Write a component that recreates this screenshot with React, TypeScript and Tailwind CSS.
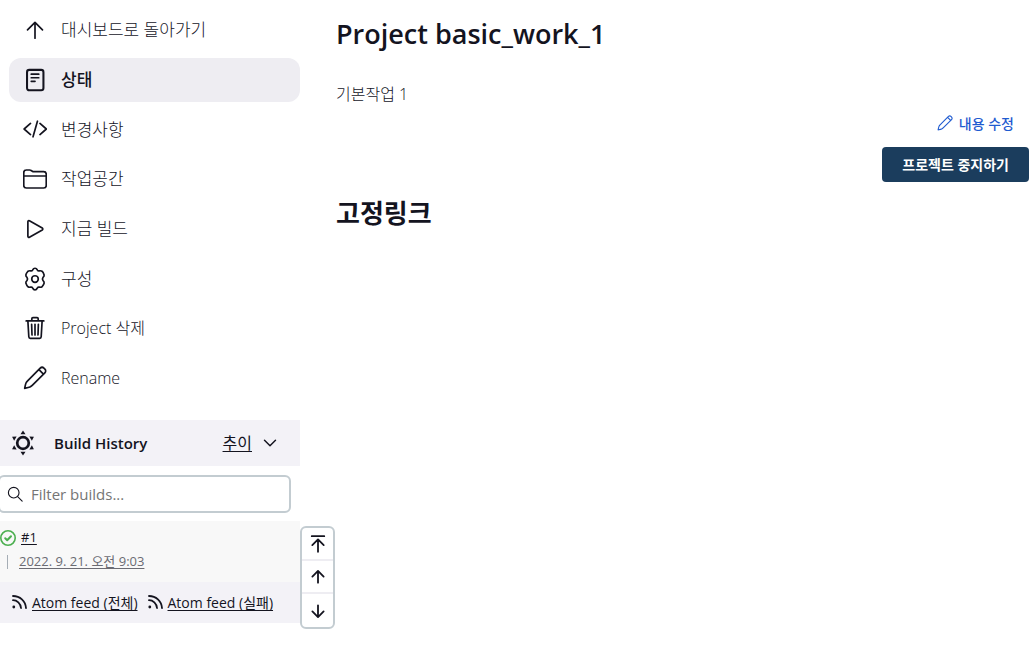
import React from "react";

type IconProps = { className?: string };

function Svg({ children, className = "size-6", width = 36 }: { children: React.ReactNode; className?: string; width?: number }) {
  return (
    <svg viewBox="0 0 512 512" className={`shrink-0 ${className}`} fill="none" stroke="currentColor" strokeWidth={width} strokeLinecap="round" strokeLinejoin="round" aria-hidden="true">
      {children}
    </svg>
  );
}

const ArrowUp = () => (
  <Svg><path d="M96 252L256 92l160 160M256 92v340" /></Svg>
);
const Status = () => (
  <Svg width={44}>
    <rect x="86" y="40" width="350" height="436" rx="48" />
    <path d="M176 132h160M176 208h160M176 284h80" strokeWidth="36" />
  </Svg>
);
const Code = () => (
  <Svg><path d="M160 374L24 256l136-118M362 374l136-118-136-118M308 90l-94 332" /></Svg>
);
const Folder = () => (
  <Svg>
    <path d="M496 192v200a56 56 0 01-56 56H72a56 56 0 01-56-56V120a56 56 0 0156-56h70a56 56 0 0131 9l26 17a56 56 0 0031 10h210a56 56 0 0156 56v36M16 192h480" />
  </Svg>
);
const Play = () => (
  <Svg><path d="M104 100v312c0 17 18 28 33 20l274-156c15-9 15-31 0-40L137 80c-15-8-33 3-33 20z" /></Svg>
);
const Gear = () => (
  <Svg>
    <circle cx="256" cy="256" r="70" />
    <path d="M211 56Q222 26 256 26T301 56Q310 90 347 83Q381 74 406 91T451 169Q455 198 428 220Q403 256 428 292Q455 314 451 343T406 421Q381 438 347 429Q310 422 301 456Q290 486 256 486T211 456Q202 422 165 429Q131 438 106 421T61 343Q57 314 84 292Q109 256 84 220Q57 198 61 169T106 91Q131 74 165 83Q202 90 211 56Z" />
  </Svg>
);
const Trash = () => (
  <Svg>
    <path d="M104 104l20 340c1 18 14 32 32 32h200c18 0 31-14 32-32l20-340M68 104h376M188 104V60a24 24 0 0124-24h88a24 24 0 0124 24v44M256 176v228M184 176l8 228M328 176l-8 228" />
  </Svg>
);
const Pencil = ({ className }: IconProps) => (
  <Svg className={className}>
    <path d="M36 476c10-48 15-79 28-112 8-20 20-34 34-48L367 47c23-23 57-23 79-1l21 21c22 22 22 56-1 79L197 415c-14 14-28 26-48 34-33 13-65 18-113 27zM341 78l94 94" />
  </Svg>
);

const nav = [
  { label: "대시보드로 돌아가기", icon: <ArrowUp />, size: "text-[17px]" },
  { label: "상태", icon: <Status />, size: "text-[17px]", active: true },
  { label: "변경사항", icon: <Code />, size: "text-[17px]" },
  { label: "작업공간", icon: <Folder />, size: "text-[17px]" },
  { label: "지금 빌드", icon: <Play />, size: "text-[17px]" },
  { label: "구성", icon: <Gear />, size: "text-[17px]" },
  { label: "Project 삭제", icon: <Trash />, size: "text-base" },
  { label: "Rename", icon: <Pencil />, size: "text-base" },
];

function BuildIcon() {
  return (
    <svg viewBox="0 0 26 26" className="size-[26px] shrink-0" fill="currentColor" aria-hidden="true">
      <circle cx="13" cy="13" r="5.8" fill="none" stroke="currentColor" strokeWidth="2.7" />
      {[0, 60, 120, 180, 240, 300].map((a) => (
        <path key={a} d="M13 0.400l2.500 3.800h-5z" transform={`rotate(${a} 13 13)`} />
      ))}
    </svg>
  );
}

function Feed({ label }: { label: string }) {
  return (
    <a href="#feed" className="flex items-center gap-1">
      <svg viewBox="0 0 16 16" className="size-4 shrink-0" fill="none" stroke="currentColor" strokeWidth="1.8" strokeLinecap="round" aria-hidden="true">
        <circle cx="1.8" cy="12" r="1.4" fill="currentColor" stroke="none" />
        <path d="M1 5.200C5 5.200 8.600 8.500 9 13M1 1C8 1 13.500 6 14 13" />
      </svg>
      <span className="underline underline-offset-2">{label}</span>
    </a>
  );
}

export default function App() {
  return (
    <div className="flex items-start bg-white font-['Open_Sans','Noto_Sans_CJK_KR',sans-serif] text-[#14141f]">
      <aside className="w-[300px] shrink-0">
        <nav aria-label="프로젝트" className="ml-[9px] flex min-h-[400px] flex-col justify-between pt-2">
          {nav.map((item) => (
            <a
              key={item.label}
              href="#project"
              aria-current={item.active ? "page" : undefined}
              className={`flex h-11 items-center gap-3.5 rounded-xl px-3.5 ${item.size} ${item.active ? "bg-[#eeedf2] font-medium" : "font-light"}`}
            >
              {item.icon}
              <span>{item.label}</span>
            </a>
          ))}
        </nav>

        <section aria-label="Build History" className="mt-5">
          <header className="flex h-[46px] items-center bg-[#f3f2f7] pr-[22px] pl-2.5">
            <BuildIcon />
            <h2 className="ml-[18px] flex-1 text-[15px] font-semibold">Build History</h2>
            <a href="#trend" className="text-base underline underline-offset-2">추이</a>
            <button type="button" aria-label="접기" className="ml-2.5">
              <Svg className="size-4" width={46}><path d="M80 170l176 176 176-176" /></Svg>
            </button>
          </header>
          <label className="-ml-0.5 mt-[9px] mr-[9px] flex h-[38px] items-center gap-2 rounded-md border-2 border-[#c3ccd1] pl-[7px]">
            <Svg className="size-4"><circle cx="215" cy="215" r="170" /><path d="M340 340l145 145" /></Svg>
            <input type="text" aria-label="Filter builds" placeholder="Filter builds..." className="min-w-0 flex-1 bg-transparent text-[15px] outline-none placeholder:text-[#757575]" />
          </label>
          <div className="mt-2 flex h-[61px] flex-col gap-1 bg-[#f8f8f8] pt-[7px] text-[13px]">
            <div className="flex h-5 items-center gap-[5px]">
              <svg viewBox="0 0 16 16" className="size-4 shrink-0" fill="none" stroke="#4caf50" strokeLinecap="round" strokeLinejoin="round" role="img" aria-label="성공">
                <circle cx="8" cy="8" r="7.2" strokeWidth="1.6" />
                <path d="M5.200 8.300l2 2L11 6.200" strokeWidth="2" />
              </svg>
              <a href="#build" className="font-medium underline underline-offset-2">#1</a>
            </div>
            <div className="ml-[7px] flex h-5 items-center gap-[11px]">
              <span className="h-3.5 w-px bg-[#a5adb5]" />
              <a href="#build" className="text-[#6b6b73] underline underline-offset-2">2022. 9. 21. 오전 9:03</a>
            </div>
          </div>
          <footer className="flex h-[41px] items-center gap-2.5 bg-[#f3f2f7] pl-3 text-[14px]">
            <Feed label="Atom feed (전체)" />
            <Feed label="Atom feed (실패)" />
          </footer>
        </section>
      </aside>

      <div className="mt-[526px] flex w-[35px] shrink-0 flex-col divide-y-2 divide-[#eeedf2] rounded-md border-2 border-[#c3ccd1]">
        <button type="button" aria-label="처음으로" className="flex h-[33px] items-center justify-center">
          <Svg className="size-5" width={46}><path d="M96 56h320M110 286l146-146 146 146M256 150v304" /></Svg>
        </button>
        <button type="button" aria-label="위로" className="flex h-[33px] items-center justify-center">
          <Svg className="size-5" width={46}><path d="M112 244l144-144 144 144M256 110v292" /></Svg>
        </button>
        <button type="button" aria-label="아래로" className="flex h-[33px] items-center justify-center">
          <Svg className="size-5" width={46}><path d="M112 268l144 144 144-144M256 402V110" /></Svg>
        </button>
      </div>

      <main className="min-w-0 flex-1 pt-4 pr-1 pl-px">
        <h1 className="text-[27px] leading-9 font-semibold">Project basic_work_1</h1>
        <p className="mt-8 text-base leading-5 font-light">기본작업 1</p>
        <div className="mt-[9px] flex flex-col items-end gap-3.5 text-[14px] font-medium">
          <a href="#edit" className="mr-[15px] flex h-5 items-center gap-1.5 text-[#1f5bd0]">
            <Pencil className="size-4" />
            내용 수정
          </a>
          <button type="button" className="h-[35px] rounded bg-[#1b3d5d] px-5 font-bold text-white">프로젝트 중지하기</button>
        </div>
        <h2 className="mt-[13px] text-[26px] leading-9 font-bold">고정링크</h2>
      </main>
    </div>
  );
}
